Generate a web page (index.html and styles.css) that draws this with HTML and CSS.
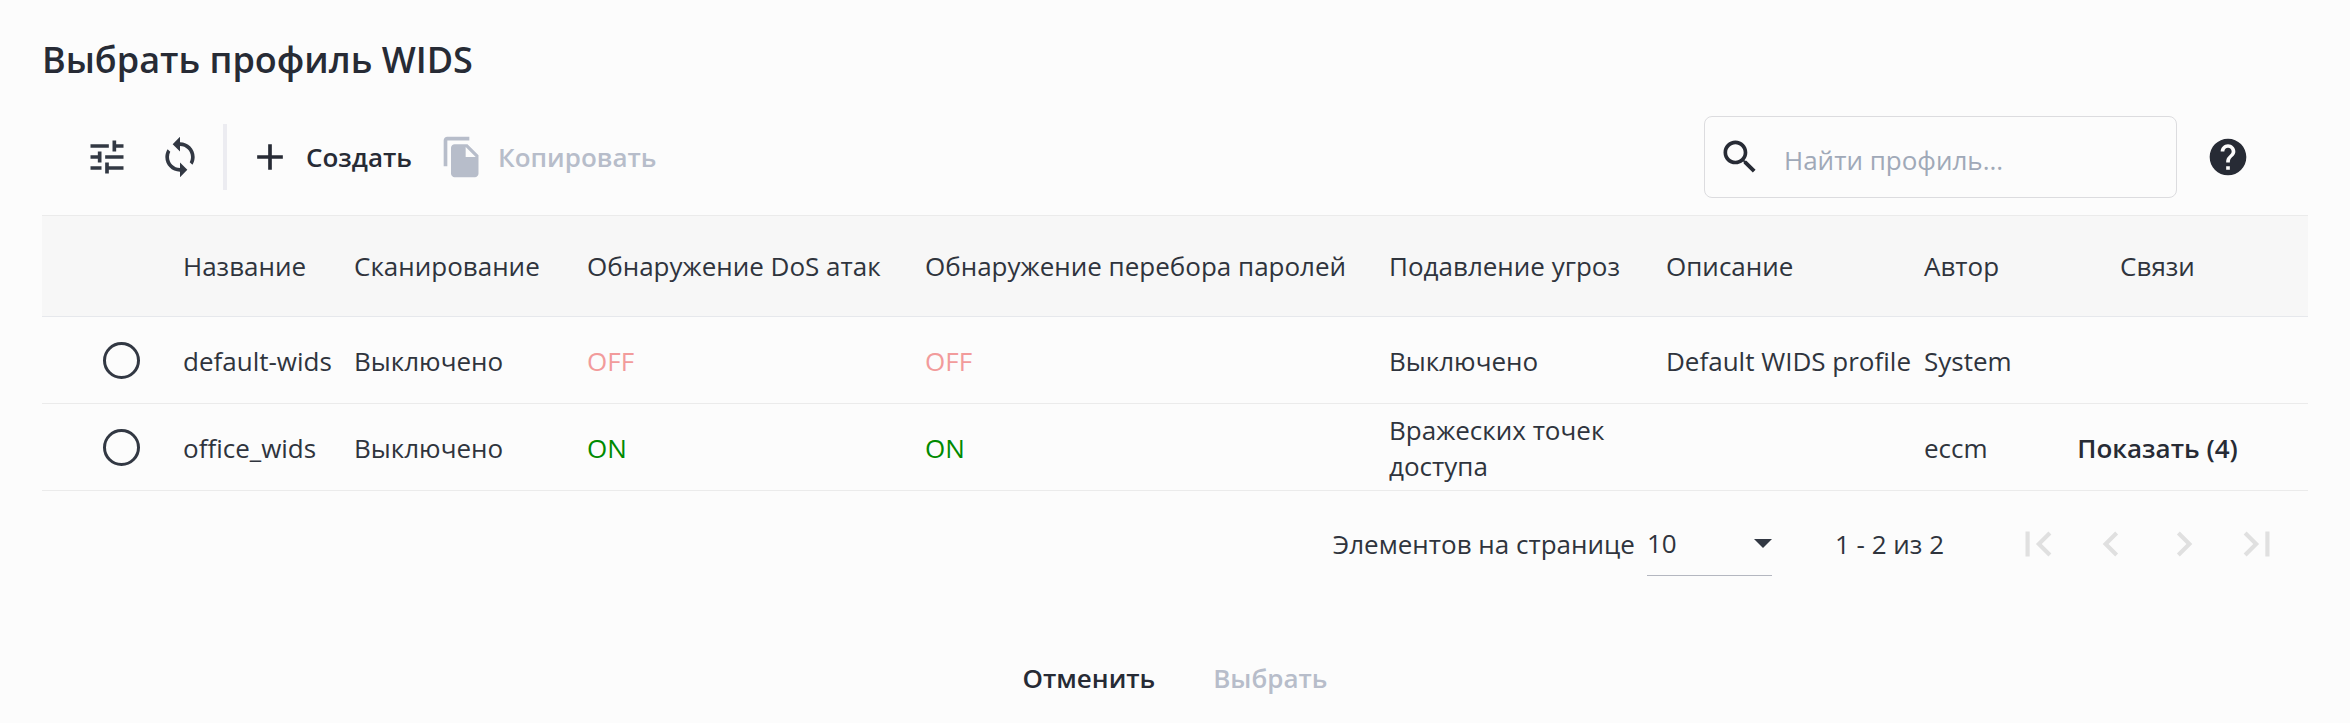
FILE: index.html
```html
<!DOCTYPE html>
<html lang="ru">
<head>
    <meta charset="UTF-8">
    <meta name="viewport" content="width=device-width, initial-scale=1.0">
    <title>Выбрать профиль WIDS</title>
    <link rel="stylesheet" href="styles.css">
</head>
<body>

<div class="dialog">
    <h1 class="title">Выбрать профиль WIDS</h1>

    <div class="toolbar">
        <button class="icon-button" type="button" aria-label="Настройка столбцов">
            <svg class="icon" viewBox="0 0 24 24"><path d="M3 17v2h6v-2H3zM3 5v2h10V5H3zm10 16v-2h8v-2h-8v-2h-2v6h2zM7 9v2H3v2h4v2h2V9H7zm14 4v-2H11v2h10zm-6-4h2V7h4V5h-4V3h-2v6z"/></svg>
        </button>
        <button class="icon-button" type="button" aria-label="Обновить">
            <svg class="icon" viewBox="0 0 24 24"><path d="M12 4V1L8 5l4 4V6c3.31 0 6 2.69 6 6 0 1.01-.25 1.97-.7 2.8l1.46 1.46C19.54 15.03 20 13.57 20 12c0-4.42-3.58-8-8-8zm0 14c-3.31 0-6-2.69-6-6 0-1.01.25-1.97.7-2.8L5.24 7.74C4.46 8.97 4 10.43 4 12c0 4.42 3.58 8 8 8v3l4-4-4-4v3z"/></svg>
        </button>
        <div class="divider"></div>
        <button class="text-button create" type="button">
            <svg class="icon" viewBox="0 0 24 24"><path d="M19 13h-6v6h-2v-6H5v-2h6V5h2v6h6v2z"/></svg>
            Создать
        </button>
        <button class="text-button copy" type="button" disabled>
            <svg class="icon" viewBox="0 0 24 24"><path d="M16 1H4c-1.1 0-2 .9-2 2v14h2V3h12V1zm-1 4l6 6v10c0 1.1-.9 2-2 2H7.990C6.890 23 6 22.100 6 21l.010-14c0-1.100.890-2 1.990-2h7zm-1 7h5.500L14 6.500V12z"/></svg>
            Копировать
        </button>
        <label class="search">
            <svg class="icon" viewBox="0 0 24 24"><path d="M15.500 14h-.790l-.280-.270C15.410 12.590 16 11.110 16 9.500 16 5.910 13.090 3 9.500 3S3 5.910 3 9.500 5.910 16 9.500 16c1.610 0 3.090-.590 4.230-1.570l.270.280v.790l5 4.990L20.490 19l-4.990-5zm-6 0C7.010 14 5 11.990 5 9.500S7.010 5 9.500 5 14 7.010 14 9.500 11.990 14 9.500 14z"/></svg>
            <input type="text" placeholder="Найти профиль..." aria-label="Найти профиль">
        </label>
        <button class="icon-button help" type="button" aria-label="Справка">
            <svg class="icon" viewBox="0 0 24 24"><path d="M12 2C6.480 2 2 6.480 2 12s4.480 10 10 10 10-4.480 10-10S17.520 2 12 2zm1 17h-2v-2h2v2zm2.070-7.750l-.900.920C13.450 12.900 13 13.500 13 15h-2v-.500c0-1.100.450-2.100 1.170-2.830l1.240-1.260c.370-.360.590-.860.590-1.410 0-1.100-.900-2-2-2s-2 .900-2 2H8c0-2.210 1.790-4 4-4s4 1.790 4 4c0 .880-.360 1.680-.930 2.250z"/></svg>
        </button>
    </div>

    <table class="profiles">
        <colgroup>
            <col class="col-radio">
            <col class="col-name">
            <col class="col-scan">
            <col class="col-dos">
            <col class="col-brute">
            <col class="col-threat">
            <col class="col-desc">
            <col class="col-author">
            <col>
        </colgroup>
        <thead>
            <tr>
                <th></th>
                <th>Название</th>
                <th>Сканирование</th>
                <th>Обнаружение DoS атак</th>
                <th>Обнаружение перебора паролей</th>
                <th>Подавление угроз</th>
                <th>Описание</th>
                <th>Автор</th>
                <th class="links">Связи</th>
            </tr>
        </thead>
        <tbody>
            <tr>
                <td><input class="radio" type="radio" name="profile" aria-label="default-wids"></td>
                <td>default-wids</td>
                <td>Выключено</td>
                <td class="off">OFF</td>
                <td class="off">OFF</td>
                <td>Выключено</td>
                <td>Default WIDS profile</td>
                <td>System</td>
                <td class="links"></td>
            </tr>
            <tr>
                <td><input class="radio" type="radio" name="profile" aria-label="office_wids"></td>
                <td>office_wids</td>
                <td>Выключено</td>
                <td class="on">ON</td>
                <td class="on">ON</td>
                <td class="threat">Вражеских точек доступа</td>
                <td></td>
                <td>eccm</td>
                <td class="links"><button class="text-button" type="button">Показать (4)</button></td>
            </tr>
        </tbody>
    </table>

    <div class="paginator">
        <label for="pageSize">Элементов на странице</label>
        <div class="page-size">
            <select id="pageSize">
                <option>10</option>
                <option>25</option>
                <option>50</option>
            </select>
            <svg class="arrow" viewBox="0 0 10 5"><path d="M0 0l5 5 5-5z"/></svg>
        </div>
        <span class="range">1 - 2 из 2</span>
        <div class="pages">
            <button type="button" aria-label="Первая страница" disabled>
                <svg class="icon" viewBox="0 0 24 24"><path d="M18.410 16.590L13.820 12l4.590-4.590L17 6l-6 6 6 6zM6 6h2v12H6z"/></svg>
            </button>
            <button type="button" aria-label="Предыдущая страница" disabled>
                <svg class="icon" viewBox="0 0 24 24"><path d="M15.410 7.410L14 6l-6 6 6 6 1.410-1.410L10.830 12z"/></svg>
            </button>
            <button type="button" aria-label="Следующая страница" disabled>
                <svg class="icon" viewBox="0 0 24 24"><path d="M10 6L8.590 7.410 13.170 12l-4.580 4.590L10 18l6-6z"/></svg>
            </button>
            <button type="button" aria-label="Последняя страница" disabled>
                <svg class="icon" viewBox="0 0 24 24"><path d="M5.590 7.410L10.180 12l-4.590 4.590L7 18l6-6-6-6zM16 6h2v12h-2z"/></svg>
            </button>
        </div>
    </div>

    <div class="actions">
        <button class="text-button" type="button">Отменить</button>
        <button class="text-button" type="button" disabled>Выбрать</button>
    </div>
</div>

</body>
</html>
```
FILE: styles.css
```css
* {
    box-sizing: border-box;
}
body {
    margin: 0;
    background-color: #fcfcfc;
    color: #2f343d;
    font-family: "Open Sans", "Noto Sans", sans-serif;
    font-size: 26px;
    line-height: 36px;
}
button, input, select {
    font: inherit;
    color: inherit;
}
button {
    display: inline-flex;
    align-items: center;
    padding: 0;
    border: none;
    background: none;
    cursor: pointer;
}
.dialog {
    padding: 36px 42px;
}
.title {
    margin: 0;
    color: #272b35;
    font-size: 36px;
    font-weight: 600;
    line-height: 48px;
}
.icon {
    display: block;
    flex: none;
    width: 44px;
    height: 44px;
    fill: currentColor;
}
.toolbar {
    display: flex;
    align-items: center;
    height: 82px;
    margin: 32px 0 17px;
    padding: 0 58px 0 43px;
}
.icon-button {
    color: #323843;
}
.icon-button + .icon-button {
    margin-left: 29px;
}
.divider {
    width: 4px;
    height: 66px;
    margin: 0 21px;
    background-color: #ececf1;
}
.text-button {
    color: #272b35;
    font-weight: 600;
}
.text-button:disabled {
    color: #b7bdca;
    cursor: default;
}
.create, .copy {
    gap: 14px;
}
.copy {
    margin-left: 28px;
}
.search {
    display: flex;
    align-items: center;
    width: 473px;
    height: 82px;
    margin: 0 29px 0 auto;
    padding: 0 13px;
    border: 1px solid #dcdcdf;
    border-radius: 8px;
    color: #272b35;
}
.search input {
    flex: 1;
    min-width: 0;
    margin-left: 22px;
    padding: 6px 0 0;
    border: none;
    outline: none;
    background: none;
}
.search input::placeholder {
    color: #a0a9b8;
    opacity: 1;
}
.help {
    color: #272b35;
}
.profiles {
    width: 100%;
    border-spacing: 0;
    table-layout: fixed;
}
.profiles th {
    height: 102px;
    padding: 0;
    border-top: 1px solid #ebebeb;
    border-bottom: 1px solid #e6e8ec;
    background-color: #f7f7f7;
    font-weight: 400;
    text-align: left;
    white-space: nowrap;
}
.profiles td {
    height: 87px;
    padding: 2px 0 0;
    border-bottom: 1px solid #ebebeb;
}
.profiles .links {
    padding-right: 61px;
    padding-left: 59px;
    text-align: center;
}
.profiles .threat {
    padding-right: 50px;
}
.col-radio {
    width: 141px;
}
.col-name {
    width: 171px;
}
.col-scan {
    width: 233px;
}
.col-dos {
    width: 338px;
}
.col-brute {
    width: 464px;
}
.col-threat {
    width: 277px;
}
.col-desc {
    width: 258px;
}
.col-author {
    width: 85px;
}
.radio {
    display: block;
    width: 37px;
    height: 37px;
    margin: 0 0 2px 61px;
    border: 3px solid #323843;
    border-radius: 50%;
    appearance: none;
}
.radio:checked {
    background: radial-gradient(#323843 50%, transparent 55%);
}
.off {
    color: #f29b9b;
}
.on {
    color: #008a00;
}
.paginator {
    display: flex;
    align-items: center;
    justify-content: flex-end;
    height: 105px;
    padding-right: 26px;
}
.page-size {
    display: flex;
    align-items: center;
    width: 125px;
    height: 64px;
    margin-left: 12px;
    border-bottom: 1px solid #b4b7c0;
}
.page-size select {
    width: 100%;
    border: none;
    outline: none;
    background: none;
    appearance: none;
}
.arrow {
    flex: none;
    width: 18px;
    height: 9px;
    fill: #323843;
}
.range {
    margin: 0 69px 0 63px;
}
.pages {
    display: flex;
    gap: 23px;
}
.pages button:disabled {
    color: #e0e0e0;
    cursor: default;
}
.pages .icon {
    width: 50px;
    height: 50px;
}
.actions {
    display: flex;
    justify-content: center;
    gap: 58px;
    padding-top: 64px;
}
```
